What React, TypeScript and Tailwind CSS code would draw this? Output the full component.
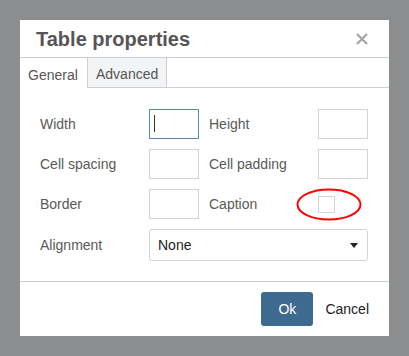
import React from 'react';

const Field = ({ label, focused }: { label: string; focused?: boolean }) => (
  <>
    <label className="text-[14px] text-[#595959]">{label}</label>
    <div
      className={`relative h-[30px] w-[50px] border ${
        focused ? 'border-[#5a87ac]' : 'border-[#ced4da]'
      } bg-white`}
    >
      {focused && <span className="absolute left-[4px] top-[5px] h-[17px] w-px bg-[#333]" />}
    </div>
  </>
);

export default function App() {
  return (
    <div
      className="h-[356px] w-[409px] bg-[#8c8d8f] p-5"
      style={{ fontFamily: '"Liberation Sans", Arial, sans-serif' }}
    >
      <div className="flex h-[316px] w-[369px] flex-col bg-white">
        <div className="flex h-[38px] items-center justify-between border-b border-[#ccd0d6] pl-[16px] pr-[21px]">
          <h1 className="text-[20px] font-bold text-[#555]">Table properties</h1>
          <svg width="12" height="12" viewBox="0 0 12 12" className="text-[#a5a5a5]">
            <path d="M1 1 L11 11 M11 1 L1 11" stroke="currentColor" strokeWidth="2.2" />
          </svg>
        </div>

        <div className="flex h-[30px]">
          <div className="flex w-[67px] items-center pl-[8px] pt-[4px] text-[14px] text-[#555]">General</div>
          <div className="flex w-[80px] items-center border-x border-b border-[#ccd0d6] bg-[#f3f4f6] pl-[8px] pt-[4px] text-[14px] text-[#555]">
            Advanced
          </div>
          <div className="flex-1 border-b border-[#ccd0d6]" />
        </div>

        <div className="px-5 pt-[21px]">
          <div className="grid grid-cols-[109px_50px_119px_50px] items-center gap-y-[10px]">
            <Field label="Width" focused />
            <label className="pl-[10px] text-[14px] text-[#595959]">Height</label>
            <div className="h-[30px] w-[50px] border border-[#ced4da]" />
            <Field label="Cell spacing" />
            <label className="pl-[10px] text-[14px] text-[#595959]">Cell padding</label>
            <div className="h-[30px] w-[50px] border border-[#ced4da]" />
            <Field label="Border" />
            <label className="pl-[10px] text-[14px] text-[#595959]">Caption</label>
            <div className="relative flex h-[30px] items-center">
              <div className="h-[17px] w-[17px] border border-[#ced4da]" />
              <svg
                className="absolute left-[-22px] top-[-1px]"
                width="66"
                height="33"
                viewBox="0 0 66 33"
              >
                <ellipse cx="33" cy="16.5" rx="31.5" ry="15" fill="none" stroke="#f00" strokeWidth="2" />
              </svg>
            </div>
            <label className="text-[14px] text-[#595959]">Alignment</label>
            <div className="col-span-3 flex h-[32px] items-center justify-between rounded-[3px] border border-[#ced4da] pl-[8px] pr-[9px] text-[14px] text-[#222]">
              <span>None</span>
              <svg width="8" height="5" viewBox="0 0 8 5">
                <path d="M0 0 H8 L4 5 Z" fill="#222" />
              </svg>
            </div>
          </div>
        </div>

        <div className="mt-auto flex h-[55px] items-center justify-end gap-[12px] border-t border-[#ccd0d6] pr-[20px]">
          <button className="h-[34px] w-[52px] rounded-[3px] bg-[#3d6a8e] text-[14px] text-white">Ok</button>
          <button className="text-[14px] text-[#222]">Cancel</button>
        </div>
      </div>
    </div>
  );
}
